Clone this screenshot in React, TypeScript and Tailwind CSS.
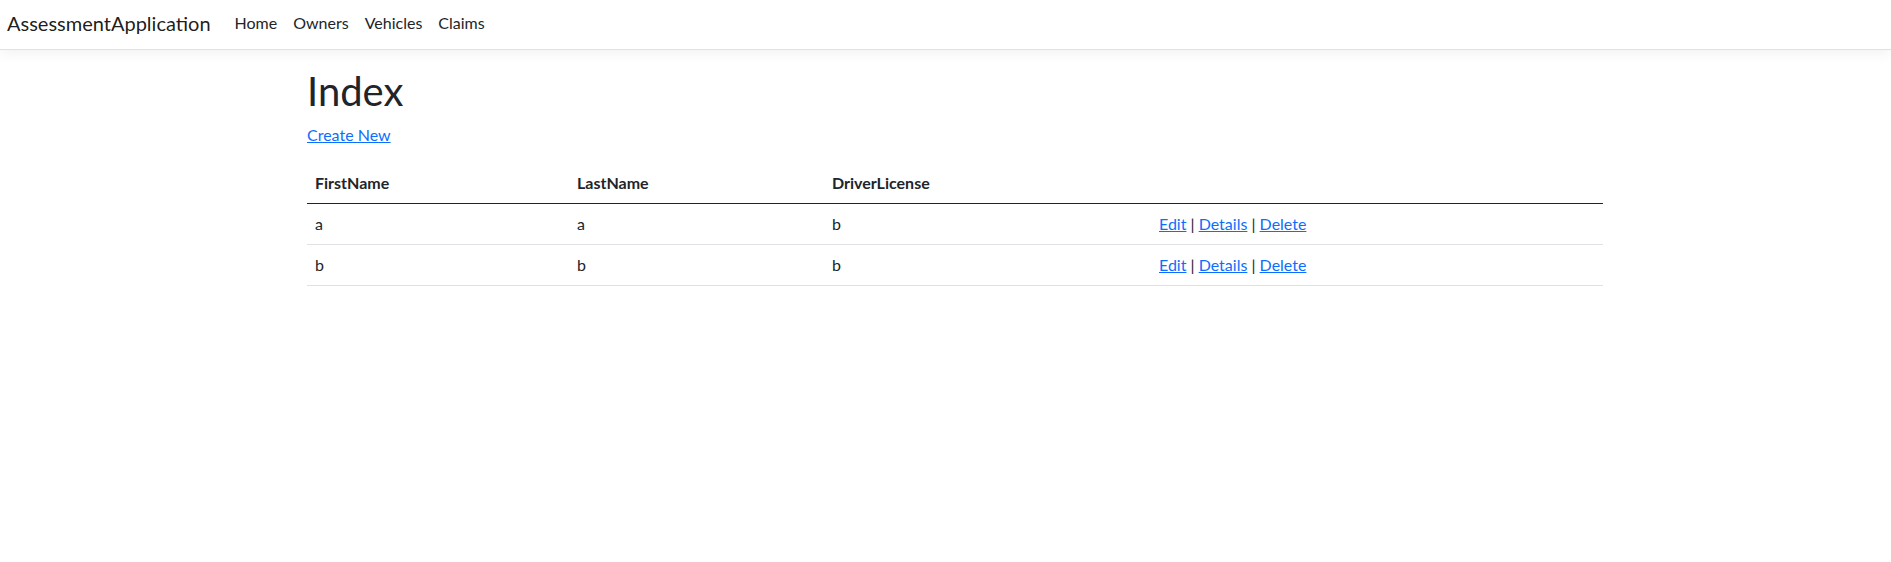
const owners = [
  { firstName: "a", lastName: "a", driverLicense: "b" },
  { firstName: "b", lastName: "b", driverLicense: "b" },
];

const navLinks = ["Home", "Owners", "Vehicles", "Claims"];

export default function App() {
  return (
    <div className="min-h-screen bg-white font-['Lato',sans-serif] text-[#212529] text-base">
      {/* Navbar */}
      <header className="h-[50px] bg-white border-b border-[#dee2e6] shadow-[0_4px_12px_rgba(0,0,0,0.05)]">
        <nav className="h-full flex items-center pl-[7px] pb-1">
          <a href="#" className="text-[20px] leading-[30px] text-[rgba(0,0,0,0.9)] mr-4">
            AssessmentApplication
          </a>
          <ul className="flex items-center">
            {navLinks.map((link) => (
              <li key={link}>
                <a href="#" className="px-2 leading-6 text-[#212529]">
                  {link}
                </a>
              </li>
            ))}
          </ul>
        </nav>
      </header>

      <main className="pl-[307px] pt-[17px]">
        <div className="w-[1296px]">
          <h1 className="text-[40px] leading-[1.2] font-normal mb-2">Index</h1>
          <p className="mb-4 leading-6">
            <a href="#" className="text-[#0d6efd] underline">
              Create New
            </a>
          </p>

          <table className="w-full border-collapse text-left">
            <thead className="border-b border-[#212529]">
              <tr>
                <th className="w-[262px] px-2 py-2 leading-6 font-bold">FirstName</th>
                <th className="w-[255px] px-2 py-2 leading-6 font-bold">LastName</th>
                <th className="w-[327px] px-2 py-2 leading-6 font-bold">DriverLicense</th>
                <th className="px-2 py-2"></th>
              </tr>
            </thead>
            <tbody>
              {owners.map((o, i) => (
                <tr key={i} className="border-b border-[#dee2e6]">
                  <td className="px-2 py-2 leading-6">{o.firstName}</td>
                  <td className="px-2 py-2 leading-6">{o.lastName}</td>
                  <td className="px-2 py-2 leading-6">{o.driverLicense}</td>
                  <td className="px-2 py-2 leading-6">
                    <a href="#" className="text-[#0d6efd] underline">Edit</a> |{" "}
                    <a href="#" className="text-[#0d6efd] underline">Details</a> |{" "}
                    <a href="#" className="text-[#0d6efd] underline">Delete</a>
                  </td>
                </tr>
              ))}
            </tbody>
          </table>
        </div>
      </main>
    </div>
  );
}
